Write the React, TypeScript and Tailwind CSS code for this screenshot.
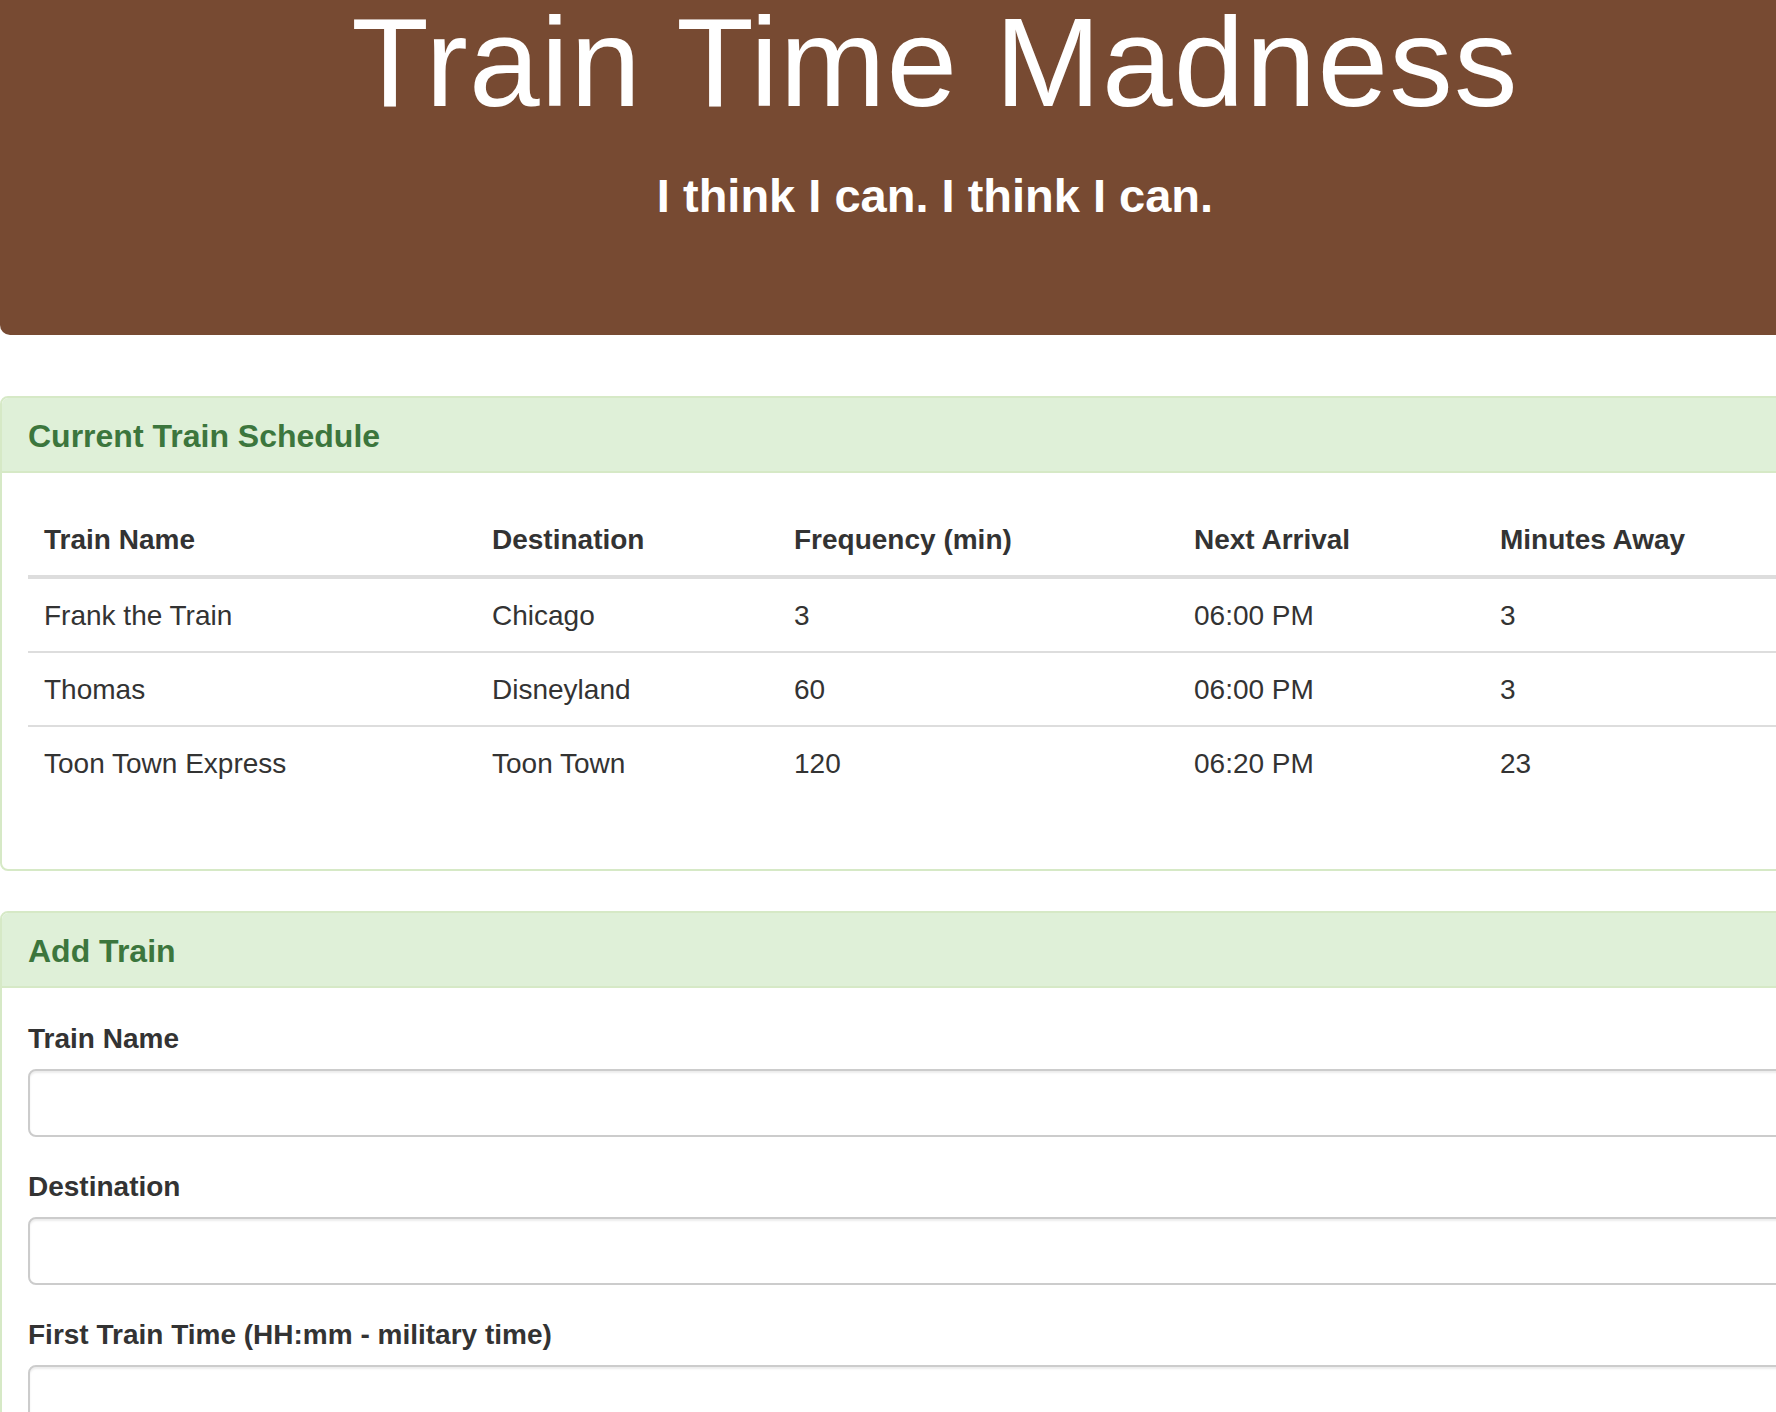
const trains = [
  { name: "Frank the Train", dest: "Chicago", freq: "3", next: "06:00 PM", away: "3" },
  { name: "Thomas", dest: "Disneyland", freq: "60", next: "06:00 PM", away: "3" },
  { name: "Toon Town Express", dest: "Toon Town", freq: "120", next: "06:20 PM", away: "23" },
];

const fields = ["Train Name", "Destination", "First Train Time (HH:mm - military time)"];

function PanelHeading({ title }: { title: string }) {
  return (
    <div className="border-b-2 border-[#d6e9c6] bg-[#dff0d8] px-[26px] pt-[21px] pb-[17px]">
      <h3 className="text-[32px] leading-[35px] font-bold text-[#3c763d]">{title}</h3>
    </div>
  );
}

export default function App() {
  return (
    <div className="w-[1776px] min-h-[1412px] overflow-hidden bg-white font-['Liberation_Sans',Arial,sans-serif] text-[#333]">
      <div className="w-[1870px]">

        {/* Jumbotron */}
        <div className="h-[335px] rounded-b-[10px] bg-[#774a32] text-center text-white">
          <h1 className="text-[127px] leading-[125px] font-normal tracking-[1.2px]">Train Time Madness</h1>
          <p className="mt-[45px] text-[47px] leading-[52px] font-bold">I think I can. I think I can.</p>
        </div>

        {/* Schedule */}
        <div className="mt-[61px] overflow-hidden rounded-[8px] border-2 border-[#d6e9c6]">
          <PanelHeading title="Current Train Schedule" />
          <div className="px-[26px] pt-[30px] pb-[30px]">
            <table className="mb-[40px] w-full table-fixed border-separate border-spacing-0 text-left text-[28px] leading-[40px]">
              <thead>
                <tr>
                  <th className="w-[448px] border-b-4 border-[#ddd] px-4 pt-[17px] pb-[15px] font-bold">Train Name</th>
                  <th className="w-[302px] border-b-4 border-[#ddd] px-4 pt-[17px] pb-[15px] font-bold">Destination</th>
                  <th className="w-[400px] border-b-4 border-[#ddd] px-4 pt-[17px] pb-[15px] font-bold">Frequency (min)</th>
                  <th className="w-[306px] border-b-4 border-[#ddd] px-4 pt-[17px] pb-[15px] font-bold">Next Arrival</th>
                  <th className="border-b-4 border-[#ddd] px-4 pt-[17px] pb-[15px] font-bold">Minutes Away</th>
                </tr>
              </thead>
              <tbody>
                {trains.map((t, i) => {
                  const cell =
                    i === 0
                      ? "px-4 pt-[17px] pb-[15px]"
                      : "border-t-2 border-[#ddd] px-4 pt-[17px] pb-[15px]";
                  return (
                    <tr key={t.name}>
                      <td className={cell}>{t.name}</td>
                      <td className={cell}>{t.dest}</td>
                      <td className={cell}>{t.freq}</td>
                      <td className={cell}>{t.next}</td>
                      <td className={cell}>{t.away}</td>
                    </tr>
                  );
                })}
              </tbody>
            </table>
          </div>
        </div>

        {/* Add train */}
        <div className="mt-[40px] overflow-hidden rounded-[8px] border-2 border-[#d6e9c6]">
          <PanelHeading title="Add Train" />
          <div className="flex flex-col gap-[30px] px-[26px] pt-[31px] pb-[30px]">
            {fields.map((f) => (
              <div key={f} className="flex flex-col">
                <label className="mb-[10px] text-[28px] leading-[40px] font-bold">{f}</label>
                <input
                  type="text"
                  className="h-[68px] w-full rounded-[8px] border-2 border-[#ccc] bg-white px-6 text-[28px] shadow-[inset_0_2px_2px_rgba(0,0,0,0.075)] outline-none"
                />
              </div>
            ))}
          </div>
        </div>

      </div>
    </div>
  );
}
